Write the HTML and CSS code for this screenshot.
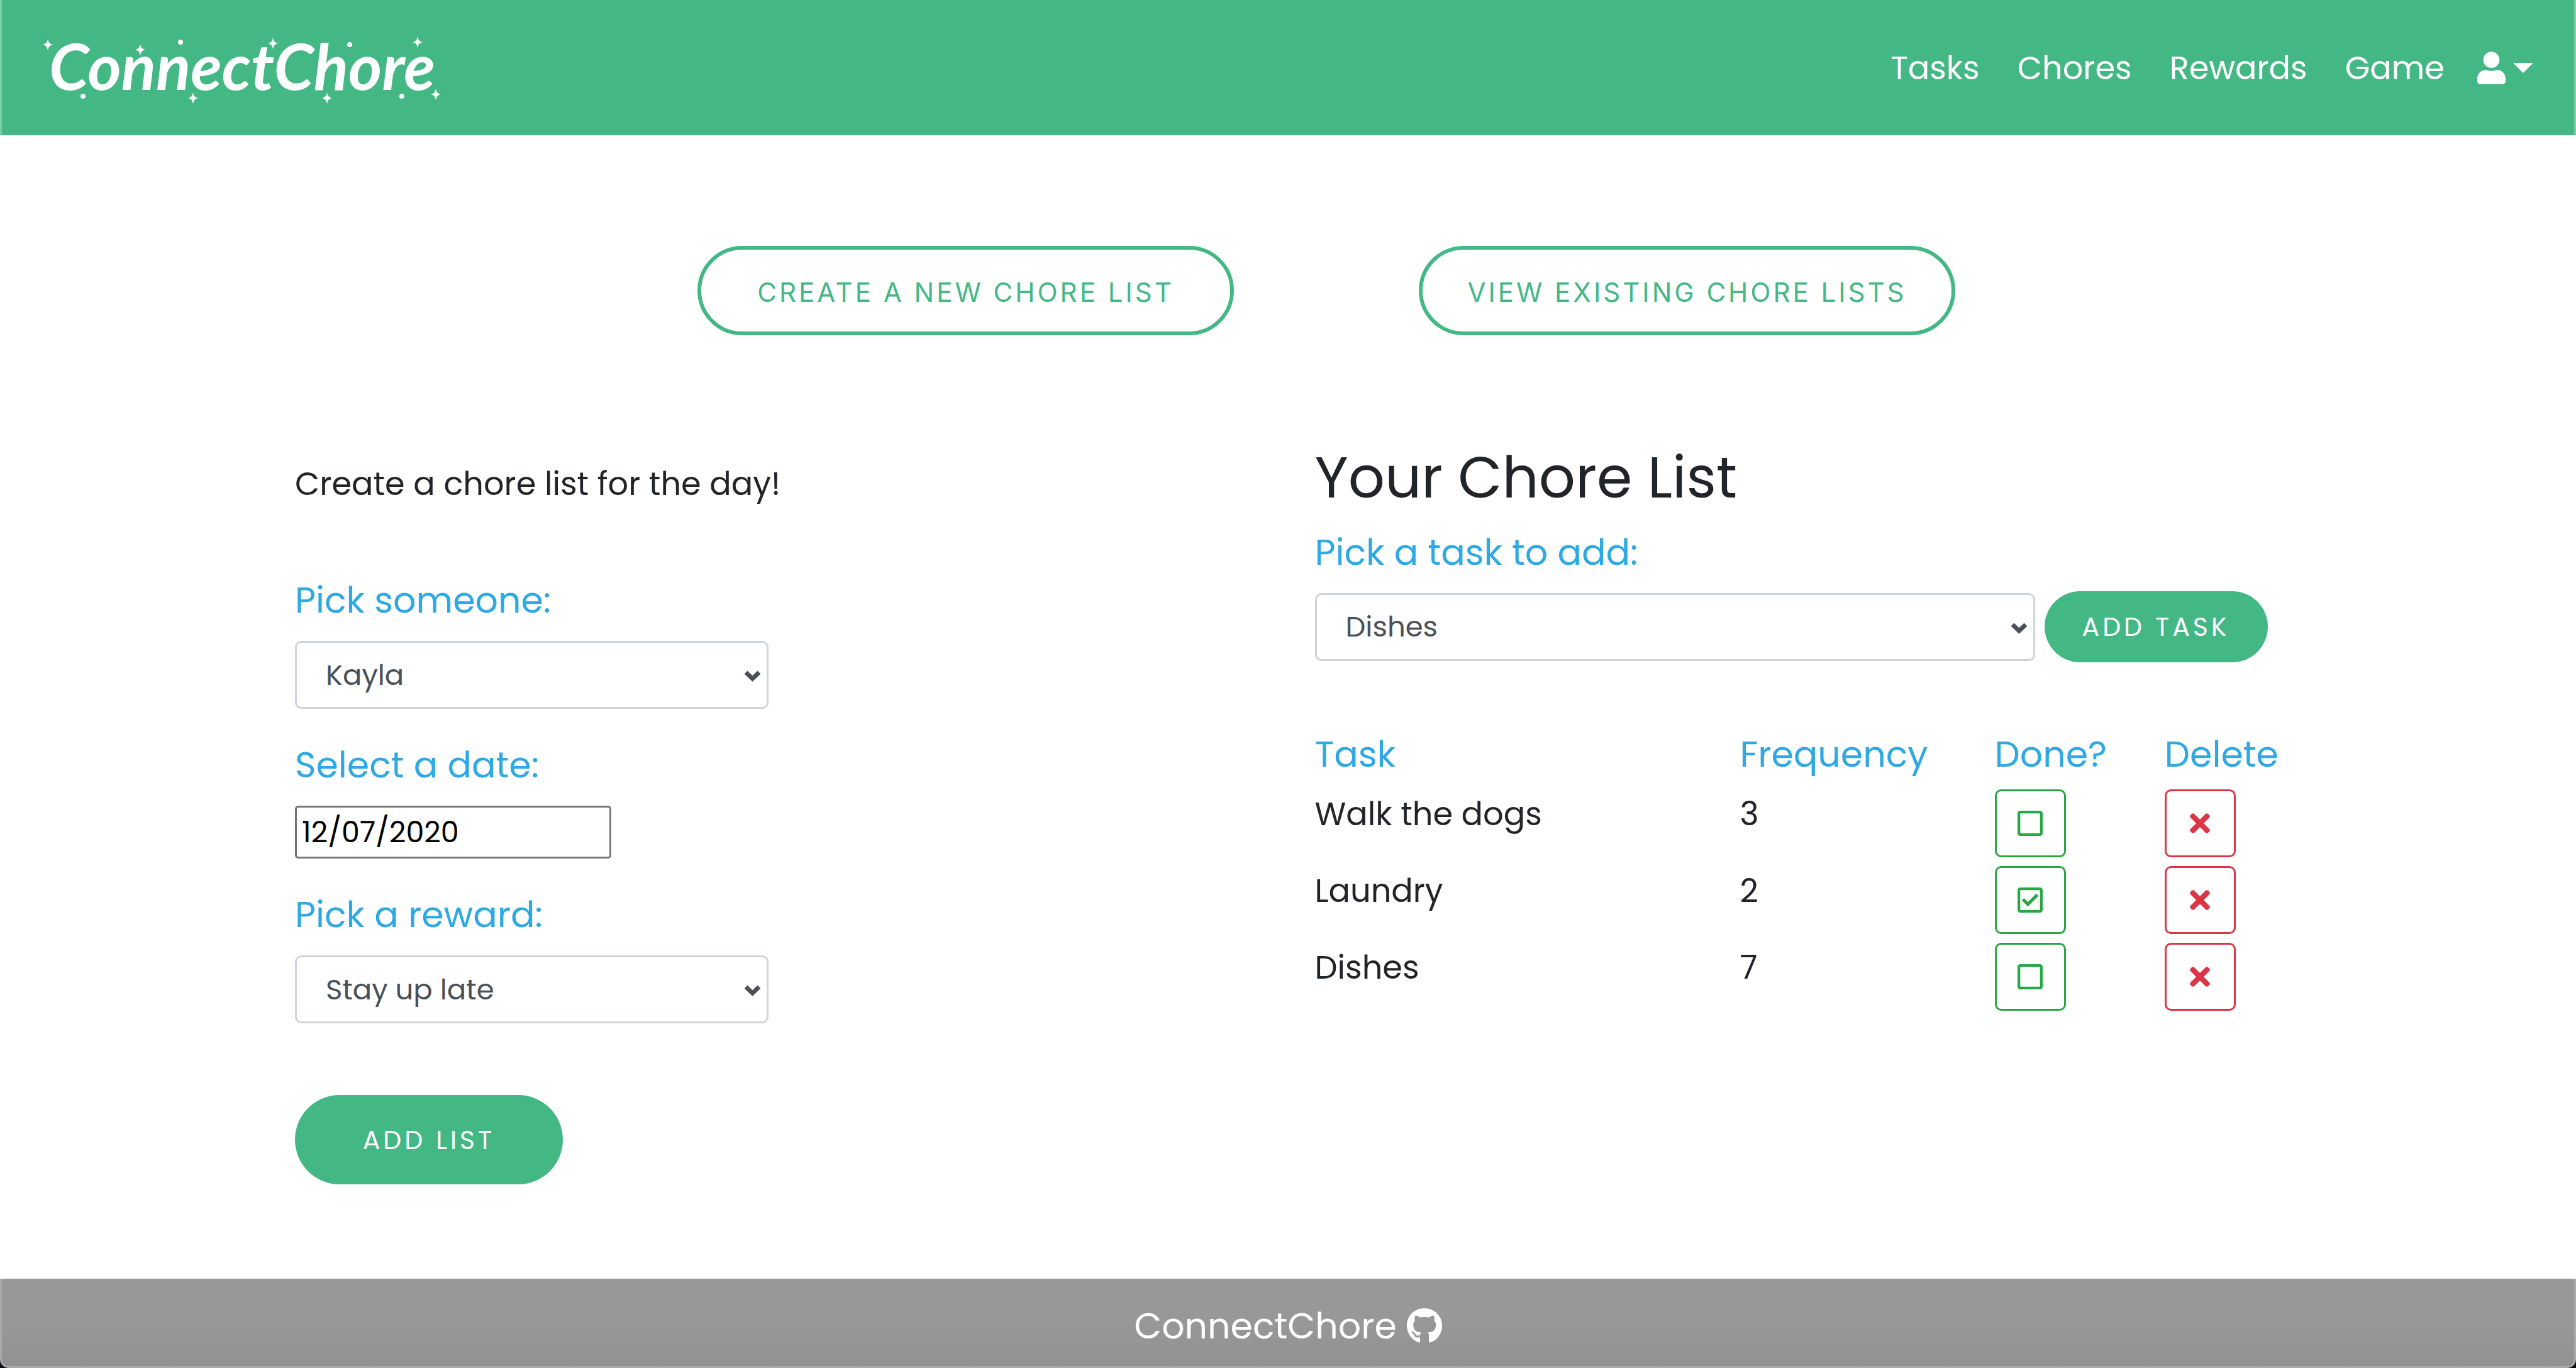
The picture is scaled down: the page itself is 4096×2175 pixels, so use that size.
FILE: index.html
```html
<!DOCTYPE html>
<html lang="en">
<head>
<meta charset="utf-8">
<title>ConnectChore</title>
<link rel="stylesheet" href="styles.css">
</head>
<body>
<svg class="sprite" aria-hidden="true">
  <symbol id="square" viewBox="0 0 448 512"><path d="M400 32H48C21.500 32 0 53.500 0 80v352c0 26.500 21.500 48 48 48h352c26.500 0 48-21.500 48-48V80c0-26.500-21.500-48-48-48zm-6 400H54c-3.300 0-6-2.700-6-6V86c0-3.300 2.700-6 6-6h340c3.300 0 6 2.700 6 6v340c0 3.300-2.700 6-6 6z"/></symbol>
  <symbol id="check" viewBox="0 0 448 512"><path d="M400 32H48C21.490 32 0 53.490 0 80v352c0 26.510 21.490 48 48 48h352c26.510 0 48-21.490 48-48V80c0-26.510-21.490-48-48-48zm0 400H48V80h352v352zm-35.864-241.724L191.547 361.480c-4.705 4.667-12.303 4.637-16.970-.068l-90.781-91.516c-4.667-4.705-4.637-12.303.069-16.971l22.719-22.536c4.705-4.667 12.303-4.637 16.970.069l59.792 60.277 141.352-140.216c4.705-4.667 12.303-4.637 16.970.068l22.536 22.718c4.667 4.706 4.637 12.304-.068 16.971z"/></symbol>
  <symbol id="times" viewBox="0 0 352 512"><path d="M242.720 256l100.070-100.070c12.280-12.280 12.280-32.190 0-44.480l-22.240-22.240c-12.280-12.280-32.190-12.280-44.480 0L176 189.280 75.930 89.210c-12.280-12.280-32.190-12.280-44.480 0L9.210 111.450c-12.280 12.280-12.280 32.190 0 44.480L109.280 256 9.210 356.070c-12.280 12.280-12.280 32.190 0 44.480l22.240 22.240c12.280 12.280 32.200 12.280 44.480 0L176 322.720l100.070 100.070c12.280 12.280 32.200 12.280 44.480 0l22.240-22.240c12.280-12.280 12.280-32.190 0-44.480L242.720 256z"/></symbol>
  <symbol id="spark" viewBox="-9 -9 18 18"><path d="M0-9Q1-1 8 0Q1 1 0 9Q-1 1-8 0Q-1-1 0-9z"/></symbol>
</svg>

<header class="navbar">
  <a class="brand" href="#" aria-label="ConnectChore home">
    <svg class="logo" viewBox="0 0 640 124">
      <text class="wordmark" x="14" y="97">ConnectChore</text>
      <use href="#spark" x="3" y="16" width="18" height="18"/>
      <use href="#spark" x="150" y="24" width="18" height="18"/>
      <use href="#spark" x="234" y="101" width="18" height="18"/>
      <use href="#spark" x="447" y="101" width="18" height="18"/>
      <use href="#spark" x="361" y="14" width="18" height="18"/>
      <use href="#spark" x="591" y="12" width="18" height="18"/>
      <use href="#spark" x="620" y="95" width="18" height="18"/>
      <circle cx="68" cy="107" r="4"/><circle cx="223" cy="21" r="4"/>
      <circle cx="492" cy="25" r="4"/><circle cx="575" cy="107" r="4"/>
    </svg>
  </a>
  <nav class="nav">
    <a href="#">Tasks</a>
    <a href="#">Chores</a>
    <a href="#">Rewards</a>
    <a href="#">Game</a>
    <button class="account" type="button" aria-label="Account">
      <svg class="user" viewBox="0 0 448 512"><path d="M224 256c70.700 0 128-57.300 128-128S294.700 0 224 0 96 57.300 96 128s57.300 128 128 128zm89.600 32h-16.700c-22.200 10.200-46.900 16-72.900 16s-50.600-5.800-72.900-16h-16.700C60.200 288 0 348.200 0 422.400V464c0 26.500 21.500 48 48 48h352c26.500 0 48-21.500 48-48v-41.600c0-74.200-60.200-134.400-134.400-134.400z"/></svg>
      <span class="caret"></span>
    </button>
  </nav>
</header>

<main>
  <div class="modes">
    <button class="pill outline" type="button">CREATE A NEW CHORE LIST</button>
    <button class="pill outline" type="button">VIEW EXISTING CHORE LISTS</button>
  </div>

  <div class="columns">
    <form class="create">
      <p class="intro">Create a chore list for the day!</p>
      <div class="field">
        <label for="person">Pick someone:</label>
        <div class="select"><select id="person"><option>Kayla</option></select><svg viewBox="0 0 27 16"><path d="M3 3l10.500 10L24 3"/></svg></div>
      </div>
      <div class="field">
        <label for="date">Select a date:</label>
        <input id="date" type="text" value="12/07/2020">
      </div>
      <div class="field">
        <label for="reward">Pick a reward:</label>
        <div class="select"><select id="reward"><option>Stay up late</option></select><svg viewBox="0 0 27 16"><path d="M3 3l10.500 10L24 3"/></svg></div>
      </div>
      <button class="pill add-list" type="button">ADD LIST</button>
    </form>

    <section class="list">
      <h1>Your Chore List</h1>
      <div class="field">
        <label for="task">Pick a task to add:</label>
        <div class="task-row">
          <div class="select"><select id="task"><option>Dishes</option></select><svg viewBox="0 0 27 16"><path d="M3 3l10.500 10L24 3"/></svg></div>
          <button class="pill add-task" type="button">ADD TASK</button>
        </div>
      </div>
      <table>
        <thead>
          <tr><th class="c-task">Task</th><th class="c-freq">Frequency</th><th class="c-act">Done?</th><th class="c-act">Delete</th></tr>
        </thead>
        <tbody>
          <tr>
            <td>Walk the dogs</td><td>3</td>
            <td><button class="icon-btn done" type="button" aria-label="Mark Walk the dogs done"><svg class="box"><use href="#square"/></svg></button></td>
            <td><button class="icon-btn delete" type="button" aria-label="Delete Walk the dogs"><svg class="cross"><use href="#times"/></svg></button></td>
          </tr>
          <tr>
            <td>Laundry</td><td>2</td>
            <td><button class="icon-btn done" type="button" aria-label="Mark Laundry not done"><svg class="box"><use href="#check"/></svg></button></td>
            <td><button class="icon-btn delete" type="button" aria-label="Delete Laundry"><svg class="cross"><use href="#times"/></svg></button></td>
          </tr>
          <tr>
            <td>Dishes</td><td>7</td>
            <td><button class="icon-btn done" type="button" aria-label="Mark Dishes done"><svg class="box"><use href="#square"/></svg></button></td>
            <td><button class="icon-btn delete" type="button" aria-label="Delete Dishes"><svg class="cross"><use href="#times"/></svg></button></td>
          </tr>
        </tbody>
      </table>
    </section>
  </div>
</main>

<footer>
  <div class="footer-bar">
    <span>ConnectChore</span>
    <a href="#" aria-label="GitHub"><svg class="github" viewBox="0 0 496 512"><path d="M165.900 397.400c0 2-2.300 3.600-5.200 3.600-3.300.3-5.600-1.300-5.600-3.600 0-2 2.300-3.600 5.200-3.600 3-.3 5.600 1.300 5.600 3.600zm-31.100-4.500c-.7 2 1.300 4.300 4.300 4.900 2.600 1 5.600 0 6.200-2s-1.300-4.300-4.300-5.200c-2.600-.7-5.500.3-6.200 2.300zm44.200-1.700c-2.900.7-4.900 2.600-4.600 4.900.3 2 2.900 3.300 5.900 2.600 2.900-.7 4.900-2.600 4.600-4.600-.3-1.900-3-3.200-5.900-2.900zM244.800 8C106.100 8 0 113.300 0 252c0 110.900 69.800 205.800 169.500 239.200 12.800 2.300 17.300-5.600 17.300-12.100 0-6.200-.3-40.400-.3-61.400 0 0-70 15-84.700-29.800 0 0-11.400-29.100-27.800-36.600 0 0-22.900-15.700 1.600-15.400 0 0 24.900 2 38.600 25.800 21.900 38.600 58.600 27.500 72.900 20.900 2.300-16 8.800-27.100 16-33.700-55.900-6.200-112.300-14.300-112.300-110.500 0-27.500 7.600-41.300 23.600-58.900-2.600-6.500-11.100-33.300 2.600-67.900 20.900-6.500 69 27 69 27 20-5.600 41.500-8.500 62.800-8.500s42.800 2.900 62.800 8.500c0 0 48.100-33.600 69-27 13.700 34.700 5.200 61.400 2.600 67.900 16 17.700 25.800 31.500 25.800 58.900 0 96.500-58.900 104.200-114.800 110.500 9.200 7.900 17 22.900 17 46.400 0 33.700-.3 75.400-.3 83.600 0 6.500 4.600 14.400 17.300 12.100C428.200 457.800 496 362.900 496 252 496 113.300 383.500 8 244.800 8z"/></svg></a>
  </div>
</footer>
</body>
</html>
```
FILE: styles.css
```css
* { box-sizing: border-box; }

body {
  margin: 0;
  min-height: 100vh;
  display: flex;
  flex-direction: column;
  background: #fff;
  color: #212529;
  font-family: Poppins, Inter, "Open Sans", sans-serif;
  font-size: 51px;
  line-height: 78px;
}

button, input, select { font-family: inherit; margin: 0; }
a { color: inherit; text-decoration: none; }
.sprite { display: none; }

.navbar {
  display: flex;
  align-items: center;
  justify-content: space-between;
  height: 215px;
  padding: 0 65px 0 61px;
  border: solid #7bcba9;
  border-width: 0 3px;
  background: #44b884;
  color: #fff;
}
.logo { display: block; width: 640px; height: 124px; fill: currentColor; overflow: visible; }
.wordmark { font: italic 700 102px Lato, sans-serif; }
.nav { display: flex; align-items: center; gap: 60px; }
.account {
  display: flex;
  align-items: center;
  gap: 12px;
  margin-left: -8px;
  padding: 0;
  border: 0;
  background: none;
  color: inherit;
}
.user { width: 45px; height: 52px; fill: currentColor; }
.caret { border: 16px solid transparent; border-top-color: currentColor; border-bottom: 0; }

main { flex: 1; }
.modes {
  display: flex;
  justify-content: center;
  gap: 294px;
  padding: 176px 0 0 122px;
}
.pill {
  height: 142px;
  padding: 0;
  border: 0;
  border-radius: 72px;
  background: #44b884;
  color: #fff;
  font-size: 41px;
  letter-spacing: 5px;
}
.outline {
  width: 853px;
  padding-top: 4px;
  border: 6px solid #44b884;
  background: #fff;
  color: #44b884;
  font-family: Inter, sans-serif;
  font-size: 42px;
  letter-spacing: 4px;
}

.columns {
  display: grid;
  grid-template-columns: 1fr 1fr;
  padding: 174px 384px 0 469px;
}
.create, .list { display: flex; flex-direction: column; align-items: flex-start; }
.intro { margin: 23px 0 104px; }
.field { display: flex; flex-direction: column; align-items: flex-start; gap: 23px; margin-bottom: 47px; }
label, th { color: #2ea9e3; font-size: 57px; line-height: 84px; font-weight: 400; }

.select { position: relative; width: 753px; }
.select select {
  display: block;
  width: 100%;
  height: 108px;
  padding: 0 80px 0 46px;
  border: 3px solid #ced4da;
  border-radius: 10px;
  background: #fff;
  color: #495057;
  font-size: 45px;
  appearance: none;
}
.select svg {
  position: absolute;
  right: 12px;
  top: 47px;
  width: 27px;
  height: 16px;
  fill: none;
  stroke: #495057;
  stroke-width: 7;
  overflow: visible;
  pointer-events: none;
}
#date {
  width: 503px;
  height: 84px;
  padding: 0 8px;
  border: 3px solid #767676;
  border-radius: 5px;
  background: #fff;
  color: #000;
  font-size: 46px;
}
.add-list { width: 426px; margin-top: 67px; }

h1 { margin: 0 0 25px; font-size: 91px; line-height: 104px; font-weight: 400; }
.task-row { display: flex; align-items: center; gap: 15px; margin: -3px 0; }
.task-row .select { width: 1145px; }
.add-task { width: 355px; height: 113px; }

table { width: 100%; margin-top: 60px; border-collapse: collapse; table-layout: fixed; }
th, td { padding: 0; text-align: left; vertical-align: top; }
td { height: 122px; padding-top: 14px; }
.c-task { width: 676px; }
.c-freq { width: 405px; }
.icon-btn {
  display: flex;
  align-items: center;
  justify-content: center;
  width: 113px;
  height: 108px;
  padding: 0;
  border: 3px solid;
  border-radius: 10px;
  background: #fff;
}
.icon-btn svg { height: 46px; fill: currentColor; }
.done { color: #28a745; }
.delete { color: #dc3545; }
.box { width: 40px; }
.cross { width: 32px; }

footer { background: #0b0e14; }
.footer-bar {
  display: flex;
  align-items: center;
  justify-content: center;
  gap: 16px;
  height: 142px;
  padding-top: 10px;
  border: solid #a9a9a9;
  border-width: 0 3px 3px;
  border-radius: 0 0 14px 14px;
  background: linear-gradient(#989898 50%, #919191);
  color: #fff;
  font-size: 57px;
}
.github { display: block; width: 56px; height: 58px; fill: currentColor; }
```
